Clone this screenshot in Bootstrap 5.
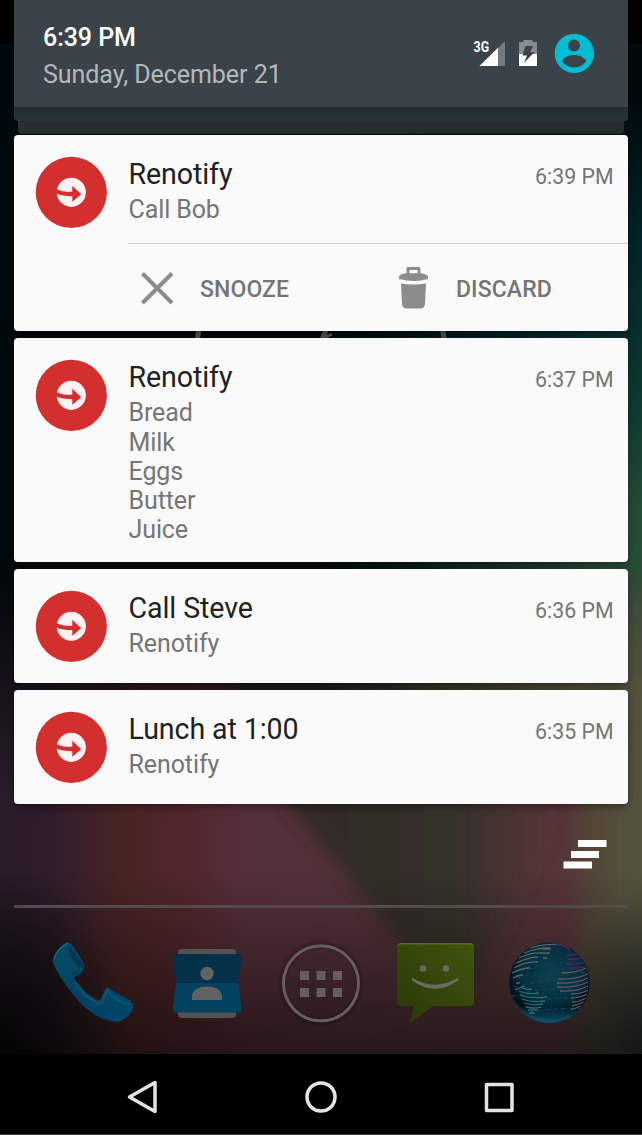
<!DOCTYPE html>
<html lang="en">
<head>
<meta charset="utf-8">
<meta name="viewport" content="width=device-width, initial-scale=1">
<title>Notifications</title>
<link href="https://cdn.jsdelivr.net/npm/bootstrap@5.3.0/dist/css/bootstrap.min.css" rel="stylesheet">
<style>
  body { font-family: Roboto, sans-serif; background: #000; }
  svg { display: block; flex: none; }
  .phone { width: 642px; height: 1135px; }
  .wallpaper { z-index: 0; }
  .shade { z-index: 1; height: 1054px; padding: 0 14px; }
  .status-head { height: 107px; background: #3b434a; padding: 0 34px 0 29px; }
  .clock { font-size: 25px; font-weight: 500; line-height: 29px; color: #fff; margin-top: 23px; letter-spacing: -.05px; }
  .day { font-size: 25px; line-height: 29px; color: #b3b8bb; margin-top: 8px; letter-spacing: -.05px; }
  .stack-a { height: 14px; background: linear-gradient(#222d33, #283339 70%); border-radius: 0 0 4px 4px; }
  .stack-b { height: 13px; margin: 0 4px 1px; background: #282d2f; border-radius: 0 0 3px 3px; }
  .note { background: #fafafa; border: 0; border-radius: 4px; margin-bottom: 7px; box-shadow: 0 3px 8px rgba(0,0,0,.4); overflow: hidden; }
  .note-main { padding: 21px 14.5px 0 21px; }
  .note-text { margin-left: 21.5px; padding-top: 1px; }
  .note-title { font-size: 28.6px; line-height: 34px; color: #212121; letter-spacing: -.1px; }
  .note-line { font-size: 25px; line-height: 29.2px; color: #757575; margin-top: 4.4px; letter-spacing: -.1px; }
  .note-time { font-size: 21.3px; line-height: 25px; color: #757575; margin-top: 7.6px; }
  .note-actions { height: 88px; margin-left: 114px; border-top: 1.6px solid #cfcfcf; }
  .act { flex: 0 0 256px; padding-left: 10px; font-size: 23px; font-weight: 500; color: #757575; }
  .act span { margin-left: 23px; padding-top: 5px; letter-spacing: .1px; }
  .h-196 { height: 196px; } .h-224 { height: 224px; } .h-114 { height: 114px; }
  .clear-row { height: 101px; padding: 36px 21px 0 0; }
  .dock-line { height: 3px; background: #54494c; margin-bottom: 2px; }
  .navkeys { height: 81px; background: #000; border-bottom: 1px solid #2d404f; z-index: 1; padding: 0 118px; }
</style>
</head>
<body>
<svg width="0" height="0" class="position-absolute">
  <defs>
    <symbol id="logo" viewBox="0 0 72 72">
      <circle cx="36.300" cy="36.300" r="35.600" fill="#d32f2f"/>
      <circle cx="36.300" cy="36.300" r="14.600" fill="#fdf2f1"/>
      <path d="M20.800 32.700C26 35.500 31 35.800 37.300 35.700V29.700L46.300 38.300L37.300 45.800V40.300C31 40.300 26 39.500 20.800 37.300Z" fill="#d32f2f"/>
    </symbol>
  </defs>
</svg>
<div class="phone position-relative overflow-hidden">
  <svg class="wallpaper position-absolute top-0 start-0" width="642" height="1135" viewBox="0 0 642 1135">
    <defs>
      <linearGradient id="low" x1="0" x2="1" y1="0" y2="0">
        <stop offset="0" stop-color="#2a1c2a"/><stop offset=".08" stop-color="#301d2d"/><stop offset=".13" stop-color="#3b2129"/><stop offset=".19" stop-color="#492424"/>
        <stop offset=".3" stop-color="#53272e"/><stop offset=".38" stop-color="#55303a"/><stop offset=".8" stop-color="#533537"/>
        <stop offset=".88" stop-color="#573539"/><stop offset=".93" stop-color="#544939"/><stop offset="1" stop-color="#55533f"/>
      </linearGradient>
      <linearGradient id="wedge" x1="280" x2="560" y1="0" y2="0" gradientUnits="userSpaceOnUse">
        <stop offset=".2" stop-color="#302c26"/><stop offset=".65" stop-color="#37312b"/><stop offset="1" stop-color="#4a3534" stop-opacity="0"/>
      </linearGradient>
      <linearGradient id="right" x1="0" x2="0" y1="0" y2="1135" gradientUnits="userSpaceOnUse">
        <stop offset=".08" stop-color="#00090c"/><stop offset=".22" stop-color="#04282b"/><stop offset=".34" stop-color="#0d3a33"/>
        <stop offset=".45" stop-color="#255139"/><stop offset=".5" stop-color="#2b5139"/><stop offset=".54" stop-color="#454f3d"/><stop offset=".6" stop-color="#54533e"/><stop offset=".8" stop-color="#544f37"/>
      </linearGradient>
      <linearGradient id="sideMask" x1="0" x2="1" y1="0" y2="0"><stop offset=".5" stop-color="#000"/><stop offset=".95" stop-color="#fff"/></linearGradient>
      <linearGradient id="lowMask" x1="0" x2="0" y1="0" y2="1135" gradientUnits="userSpaceOnUse"><stop offset=".5" stop-color="#000"/><stop offset=".6" stop-color="#808080"/><stop offset=".7" stop-color="#fff"/></linearGradient>
      <linearGradient id="fade" x1="0" x2="0" y1="870" y2="1054" gradientUnits="userSpaceOnUse"><stop offset="0" stop-opacity="0"/><stop offset="1" stop-opacity=".54"/></linearGradient>
      <radialGradient id="cornerL"><stop stop-color="#080808" stop-opacity=".95"/><stop offset="1" stop-color="#080808" stop-opacity="0"/></radialGradient>
      <radialGradient id="cornerR"><stop stop-color="#1c2c28" stop-opacity=".9"/><stop offset="1" stop-color="#1c2c28" stop-opacity="0"/></radialGradient>
      <mask id="ms"><rect width="642" height="1135" fill="url(#sideMask)"/></mask>
      <mask id="ml"><rect width="642" height="1135" fill="url(#lowMask)"/></mask>
      <filter id="soft" x="-30%" y="-30%" width="160%" height="160%"><feGaussianBlur stdDeviation="9"/></filter>
    </defs>
    <rect width="642" height="1054" fill="#00090d"/>
    <g mask="url(#ml)">
      <rect width="642" height="1054" fill="url(#low)"/>
      <path d="M170 560L285 800L435 985L475 985L560 820L600 560Z" fill="url(#wedge)" filter="url(#soft)"/>
    </g>
    <rect width="642" height="720" fill="url(#right)" mask="url(#ms)" opacity=".95"/>
    <rect x="622" y="690" width="50" height="230" fill="#55533e" filter="url(#soft)"/>
    <ellipse cx="0" cy="1054" rx="130" ry="190" fill="url(#cornerL)"/>
    <ellipse cx="650" cy="1060" rx="90" ry="170" fill="url(#cornerR)"/>
    <rect y="870" width="642" height="184" fill="url(#fade)"/>
    <rect width="642" height="44"/>
    <g stroke="#58585a" stroke-width="5" fill="none"><path d="M199 329L197 341M442.500 329L444.500 341M322 340L326 330"/><path d="M326 337L332 334" stroke-width="3"/></g>
  </svg>

  <main class="shade position-relative">
    <header class="status-head d-flex align-items-start">
      <div class="flex-grow-1">
        <div class="clock">6:39 PM</div>
        <div class="day">Sunday, December 21</div>
      </div>
      <svg width="122" height="42" viewBox="472 33 122 42" style="margin-top:33px">
        <path d="M479.5 66L505 41V66Z" fill="#737b80"/><path d="M479.5 66L498 47.8V66Z" fill="#fff"/>
        <text x="473.6" y="52" font-size="14.5" font-weight="700" fill="#fff" textLength="15.5" lengthAdjust="spacingAndGlyphs">3G</text>
        <path d="M519 42H523.5V40H532.5V42H537V54H519Z" fill="#878c90"/><path d="M519 54H537V66H519Z" fill="#fff"/>
        <path d="M525.5 46H533L530 52H534.5L524 63L527 55.5H522.5Z" fill="#3b434a"/>
        <circle cx="574.3" cy="53.4" r="19.7" fill="#00bcd4"/>
        <circle cx="574" cy="45.6" r="6" fill="#3b434a"/>
        <path d="M562.2 61.3C564 57 569.5 55 574.2 55S584.5 57 586.2 61.3C583 65.5 579 67.5 574.2 67.5S565.2 65.5 562.2 61.3Z" fill="#3b434a"/>
      </svg>
    </header>
    <div class="stack-a"></div>
    <div class="stack-b"></div>

    <article class="card note h-196">
      <div class="note-main d-flex flex-grow-1">
        <svg width="72" height="72"><use href="#logo"/></svg>
        <div class="note-text flex-grow-1">
          <div class="note-title">Renotify</div>
          <div class="note-line">Call Bob</div>
        </div>
        <time class="note-time">6:39 PM</time>
      </div>
      <div class="note-actions d-flex">
        <div class="act d-flex align-items-center">
          <svg width="39" height="44" viewBox="0 0 39 44"><path d="M4.500 7.500L34 37M34 7.500L4.500 37" stroke="#8c8c8c" stroke-width="4"/></svg>
          <span>SNOOZE</span>
        </div>
        <div class="act d-flex align-items-center">
          <svg width="39" height="44" viewBox="0 0 39 44" fill="#8c8c8c"><path d="M14 8V2.500H25V8" fill="none" stroke="#8c8c8c" stroke-width="3" stroke-linejoin="round"/><path d="M5 10.500Q6 8 12 7.300H27Q33 8 34 10.500V13Q20 17 5 13Z"/><path d="M7 17.500Q19.500 19.500 32 17.500L31 38Q30.500 42.500 26 42.500H13Q8.500 42.500 8 38Z"/></svg>
          <span>DISCARD</span>
        </div>
      </div>
    </article>

    <article class="card note h-224">
      <div class="note-main d-flex">
        <svg width="72" height="72"><use href="#logo"/></svg>
        <div class="note-text flex-grow-1">
          <div class="note-title">Renotify</div>
          <div class="note-line">Bread<br>Milk<br>Eggs<br>Butter<br>Juice</div>
        </div>
        <time class="note-time">6:37 PM</time>
      </div>
    </article>

    <article class="card note h-114">
      <div class="note-main d-flex">
        <svg width="72" height="72"><use href="#logo"/></svg>
        <div class="note-text flex-grow-1">
          <div class="note-title">Call Steve</div>
          <div class="note-line">Renotify</div>
        </div>
        <time class="note-time">6:36 PM</time>
      </div>
    </article>

    <article class="card note h-114 mb-0">
      <div class="note-main d-flex">
        <svg width="72" height="72"><use href="#logo"/></svg>
        <div class="note-text flex-grow-1">
          <div class="note-title">Lunch at 1:00</div>
          <div class="note-line">Renotify</div>
        </div>
        <time class="note-time">6:35 PM</time>
      </div>
    </article>

    <div class="clear-row d-flex justify-content-end">
      <svg width="44" height="30" viewBox="0 0 44 30" fill="#fff"><path d="M15 0H43.500V7H15ZM8 11H36V18H8ZM.5 21.500H29V28.500H.5Z"/></svg>
    </div>
    <div class="dock-line"></div>

    <svg width="614" height="144" viewBox="14 910 614 144">
      <defs>
        <linearGradient id="ph" x1="0" y1="0" x2="1" y2="1"><stop stop-color="#08506b"/><stop offset=".5" stop-color="#003f62"/><stop offset="1" stop-color="#00476c"/></linearGradient>
        <linearGradient id="msg" x1="0" y1="1" x2="1" y2="0"><stop stop-color="#293808"/><stop offset="1" stop-color="#41540f"/></linearGradient>
        <radialGradient id="gl" cx=".52" cy=".4" r=".6"><stop stop-color="#0b414f"/><stop offset=".6" stop-color="#062f3d"/><stop offset=".9" stop-color="#020f19"/><stop offset="1" stop-color="#0a455b"/></radialGradient>
        <linearGradient id="rim" x1="0" y1="0" x2="0" y2="1"><stop offset=".8" stop-color="#0c5069" stop-opacity="0"/><stop offset="1" stop-color="#0c5573"/></linearGradient>
        <clipPath id="gc"><circle cx="549.500" cy="982.500" r="39.800"/></clipPath>
        <filter id="b1"><feGaussianBlur stdDeviation="1.500"/></filter>
      </defs>
      <!-- phone -->
      <path d="M52.500 961Q56 947 68.500 942.500Q72 943 84 964V969Q82 974 74 977Q82 995 101 1003Q103 992 108 988L131 1001Q134 1005 132.500 1010Q127 1020 117 1022Q92 1020 72 993Q57 974 52.500 961Z" fill="url(#ph)"/>
      <path d="M53.500 960Q58 948 68 944L72 954Q75 967 82 969Q76 974 70 974Q65 967 53.500 960Z" fill="#07495f" opacity=".6"/>
      <path d="M68 943.500Q67 950 73 960Q77 967 82 968L83 964Z" fill="#003451"/>
      <path d="M108 989Q108 995 121 1002Q128 1006 131 1003" fill="none" stroke="#0d5873" stroke-width="1.500"/>
      <path d="M76 983Q86 999 101 1003L108 988" fill="none" stroke="#126580" stroke-width="2" filter="url(#b1)"/>
      <path d="M54 959Q58 947 68 943" fill="none" stroke="#11657b" stroke-width="1.500"/>
      <!-- contacts -->
      <rect x="178" y="949" width="58" height="69" rx="4" fill="#505254"/>
      <path d="M177 954H237Q242 954 241.500 959L238 983H176L173 959Q172 954 177 954Z" fill="#043149"/>
      <path d="M176 983H238L241.500 1007Q242 1012.500 237 1012.500H177Q172 1012.500 173 1007Z" fill="#03425f"/>
      <circle cx="207" cy="973.500" r="6.700" fill="#626263"/><path d="M192 1000V995Q194 986.500 207 986.500T222 995V1000Z" fill="#626263"/>
      <!-- all apps -->
      <circle cx="321" cy="983.300" r="38.500" fill="none" stroke="#1c1013" stroke-opacity=".4" stroke-width="5" filter="url(#b1)"/>
      <circle cx="321" cy="983.300" r="37.500" fill="none" stroke="#655d5e" stroke-width="3"/>
      <path d="M300 971h9v9h-9zm16.500 0h9v9h-9zm16.500 0h9v9h-9zm-33 17h9v9h-9zm16.500 0h9v9h-9zm16.500 0h9v9h-9z" fill="#645e5f"/>
      <!-- messenger -->
      <path d="M401 943H470Q474 943 474 947V1002Q474 1006 470 1006H433L410 1023L414 1006H401Q397 1006 397 1002V947Q397 943 401 943Z" fill="url(#msg)"/>
      <path d="M398 945.500Q399 943.800 401 943.800H470Q472 943.800 473 945.500" fill="none" stroke="#5c6915" stroke-width="1.500"/>
      <circle cx="423" cy="968.500" r="3.300" fill="#666861"/><circle cx="446" cy="968.500" r="3.300" fill="#666861"/>
      <path d="M412 977.500Q435 992 458 977.500V980.500Q435 997 412 980.500Z" fill="#6a6c64"/>
      <!-- browser globe -->
      <circle cx="549.500" cy="982.500" r="40.300" fill="url(#gl)"/>
      <circle cx="549.500" cy="982.500" r="40.300" fill="url(#rim)"/>
      <g clip-path="url(#gc)" fill="none" stroke-width="1.300">
        <g stroke="#0a4760" stroke-dasharray="3 5"><path d="M520 970Q550 960 580 964M518 978Q550 969 590 973M514 987Q550 979 558 979M512 996Q550 985 580 991M540 1001Q560 996 573 999M530 1012Q560 1007 585 1009"/></g>
        <g stroke="#56656a"><path d="M530 948Q545 943 566 945M524 953Q540 947 550 948M519 958Q531 952 541 953M516 963Q529 957 538 957M514 968Q526 961 538 962M512 973Q522 968 530 968M513 978Q518 975 523 975M542 949H551M541 953H550M543 958H547M516 983H520M515 990L524 986"/></g>
        <g stroke="#67565f"><path d="M562 973Q576 973 586 968M558 979Q574 980 588 974M557 983Q576 984 588 978M557 987Q576 988 588 982M560 991Q576 992 588 986M571 994Q581 994 588 990M571 998Q580 998 587 994M572 1002Q579 1002 586 998M572 1006Q578 1005 584 1002M571 1010L581 1006"/></g>
        <g stroke="#631c68"><path d="M556 944Q565 945 570 950M567 955Q576 955 581 953M568 959Q577 960 584 957M565 964Q579 965 587 961M569 968Q580 969 588 965"/></g>
        <g stroke="#30686e"><path d="M520 987Q524 990 532 989M519 991Q528 995 539 993M520 995Q531 999 547 997M522 999Q533 1003 545 1001M524 1003Q534 1006 543 1004M526 1007Q534 1009 541 1007M528 1010L538 1010M529 1013L535 1013"/></g>
      </g>
    </svg>
  </main>

  <nav class="navkeys position-relative d-flex justify-content-between align-items-center">
    <svg width="50" height="50" viewBox="0 0 50 50" fill="none" stroke="#e4e4e4" stroke-width="3.500" stroke-linejoin="round"><path d="M11.500 28L37 13.500V42.500Z"/></svg>
    <svg width="50" height="50" viewBox="0 0 50 50" fill="none" stroke="#e4e4e4" stroke-width="3.500"><circle cx="25" cy="28" r="14"/></svg>
    <svg width="50" height="50" viewBox="0 0 50 50" fill="none" stroke="#e4e4e4" stroke-width="3.500" stroke-linejoin="round"><path d="M12.500 15.500H38V41.500H12.500Z"/></svg>
  </nav>
</div>
<script src="https://cdn.jsdelivr.net/npm/bootstrap@5.3.0/dist/js/bootstrap.bundle.min.js"></script>
</body>
</html>
